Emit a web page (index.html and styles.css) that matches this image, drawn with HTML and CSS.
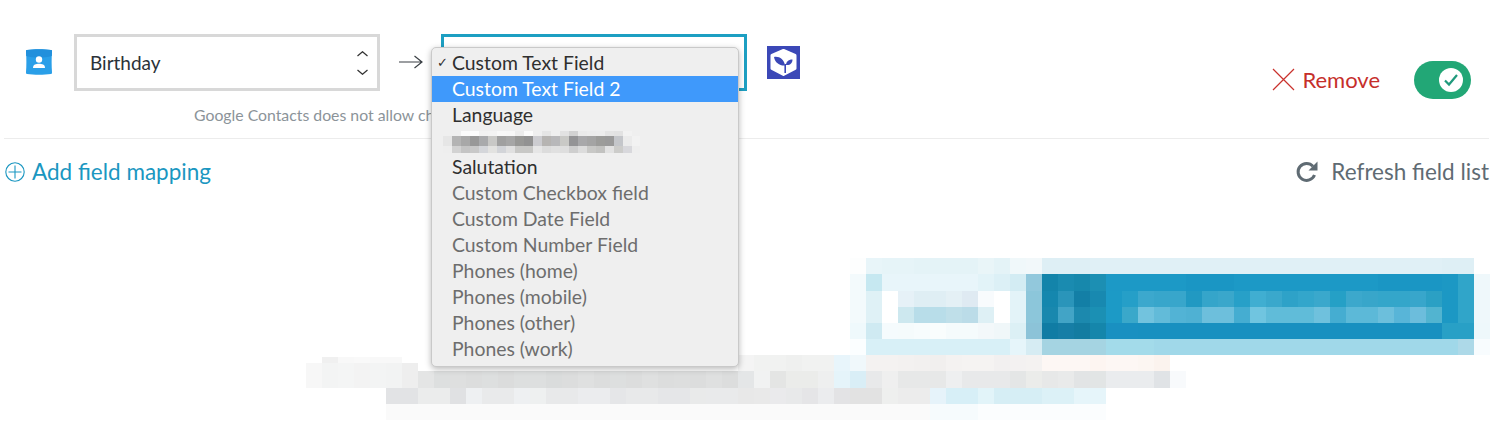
FILE: index.html

```html
<!DOCTYPE html>
<html lang="en">
<head>
    <meta charset="UTF-8">
    <title>Field mapping</title>
    <link rel="stylesheet" href="styles.css">
</head>
<body>
    <div class="mapping-row">
        <svg class="app-icon" width="28" height="26" viewBox="0 0 28 26">
            <path d="M2 1C9 0 19 0 26 1C27 1 27 2 27 3C26.500 9 26.500 17 27 23C27 24 27 25 26 25C19 26 9 26 2 25C1 25 1 24 1 23C1.500 17 1.500 9 1 3C1 2 1 1 2 1Z" fill="#2a9fe8"/>
            <path d="M1.200 7C9 9 19 9 26.800 7L27 3C27 1 27 1 26 1C19 0 9 0 2 1C1 1 1 1 1 3Z" fill="#2290dc"/>
            <circle cx="14" cy="10.500" r="3.200" fill="#fff"/>
            <path d="M8 19C8 15.500 11 14.800 14 14.800C17 14.800 20 15.500 20 19Z" fill="#fff"/>
        </svg>
        <div class="field">
            <span>Birthday</span>
            <svg class="updown" width="11" height="24" viewBox="0 0 11 24">
                <path d="M0.500 5L5.500 0.700L10.500 5M0.500 19L5.500 23.300L10.500 19" fill="none" stroke="#333" stroke-width="1.200"/>
            </svg>
        </div>
        <svg class="arrow" width="24" height="14" viewBox="0 0 24 14">
            <path d="M0 7H23M15.500 1L23 7L15.500 13" fill="none" stroke="#3a3f44" stroke-width="1.200"/>
        </svg>
        <div class="field-wrap">
            <div class="field field-active"></div>
            <ul class="menu">
                <li class="checked">Custom Text Field</li>
                <li class="hover">Custom Text Field 2</li>
                <li>Language</li>
                <li class="blurred"><svg id="menu-blur" width="197" height="25"></svg></li>
                <li>Salutation</li>
                <li class="muted">Custom Checkbox field</li>
                <li class="muted">Custom Date Field</li>
                <li class="muted">Custom Number Field</li>
                <li class="muted">Phones (home)</li>
                <li class="muted">Phones (mobile)</li>
                <li class="muted">Phones (other)</li>
                <li class="muted">Phones (work)</li>
            </ul>
        </div>
        <svg class="crm-logo" width="33" height="33" viewBox="0 0 33 33">
            <rect width="33" height="33" fill="#3b48b7"/>
            <path d="M16.500 4.500L28 9.500V22.500L16.500 28.500L5 22.500V9.500Z" fill="#fff" stroke="#fff" stroke-width="3" stroke-linejoin="round"/>
            <path d="M18.200 27V18" stroke="#3b48b7" stroke-width="1.600" fill="none"/>
            <path d="M18 19.500C13 20 8 17 7 11C12 10 17 13 18 19.500Z" fill="#3b48b7"/>
            <path d="M19 19C19 16 21 13.500 25.500 13.500C25.500 17 23 19.500 19 19Z" fill="#3b48b7"/>
        </svg>
        <div class="row-actions">
            <a class="remove">
                <svg width="23" height="23" viewBox="0 0 23 23">
                    <path d="M1 1L22 22M22 1L1 22" stroke="#c9322d" stroke-width="1.200" fill="none"/>
                </svg>
                Remove
            </a>
            <div class="toggle">
                <span class="knob">
                    <svg width="16" height="14" viewBox="0 0 16 14">
                        <path d="M2 7.500L6 11.500L14 2" fill="none" stroke="#1f9a7c" stroke-width="2.200"/>
                    </svg>
                </span>
            </div>
        </div>
    </div>
    <p class="hint">Google Contacts does not allow ch</p>
    <div class="bottom-bar">
        <a class="add-link">
            <svg width="20" height="20" viewBox="0 0 20 20">
                <circle cx="10" cy="10" r="9.200" fill="none" stroke="#1b97c1" stroke-width="1.100"/>
                <path d="M10 3.500V16.500M3.500 10H16.500" stroke="#1b97c1" stroke-width="1.100"/>
            </svg>
            Add field mapping
        </a>
        <a class="refresh-link">
            <svg width="24" height="24" viewBox="0 0 24 24">
                <path d="M19.500 15A8.500 8.500 0 1 1 18 6.300" fill="none" stroke="#5f6b73" stroke-width="3"/>
                <path d="M22.500 1.500V10.500H13.500Z" fill="#5f6b73"/>
            </svg>
            Refresh field list
        </a>
    </div>
    <svg id="promo-blur" class="promo-blur" width="1508" height="162"></svg>
    <script src="mosaic.js"></script>
</body>
</html>
```

FILE: styles.css

```css
body {
    margin: 0;
    font-family: Lato, "Open Sans", sans-serif;
    background-color: #fff;
    overflow: hidden;
}
a {
    display: flex;
    align-items: center;
}
.mapping-row {
    display: flex;
    align-items: flex-start;
    height: 57px;
    padding: 34px 37px 0 25px;
}
.app-icon {
    margin: 15px 21px 0 0;
}
.field {
    display: flex;
    align-items: center;
    justify-content: space-between;
    box-sizing: border-box;
    width: 306px;
    height: 57px;
    padding: 0 9px 0 13px;
    border: 3px solid #d8d8d8;
    font-size: 19px;
    color: #2b3238;
}
.field-active {
    border-color: #1d9fc2;
}
.arrow {
    margin: 21px 18px 0 19px;
}
.field-wrap {
    position: relative;
}
.menu {
    position: absolute;
    top: 13px;
    left: -10px;
    box-sizing: border-box;
    width: 308px;
    height: 320px;
    margin: 0;
    padding: 2px 0 0;
    list-style: none;
    background-color: #efefef;
    border: 1px solid #c9c9c9;
    border-radius: 5px;
    box-shadow: 0 2px 6px rgba(0, 0, 0, 0.28);
    font-size: 19.4px;
    color: #2f2f2f;
}
.menu li {
    position: relative;
    height: 26px;
    line-height: 26px;
    padding-left: 20px;
}
.menu .checked::before {
    content: "✓";
    position: absolute;
    left: 5px;
    font-size: 13px;
    font-weight: bold;
    font-family: "DejaVu Sans", sans-serif;
}
.menu .hover {
    background-color: #3f99fb;
    color: #fff;
}
.menu .muted {
    color: #6d6d6d;
}
.menu .blurred {
    padding-left: 11px;
}
.menu .blurred svg {
    display: block;
}
.crm-logo {
    margin: 12px 0 0 20px;
}
.row-actions {
    display: flex;
    align-items: center;
    margin: 27px 0 0 auto;
}
.remove {
    gap: 7px;
    padding-bottom: 2px;
    font-size: 22px;
    color: #c62f2b;
}
.toggle {
    display: flex;
    align-items: center;
    justify-content: flex-end;
    box-sizing: border-box;
    width: 57px;
    height: 38px;
    margin-left: 34px;
    padding-right: 8px;
    background-color: #22a776;
    border-radius: 19px;
}
.knob {
    display: flex;
    align-items: center;
    justify-content: center;
    width: 24px;
    height: 24px;
    background-color: #fff;
    border-radius: 50%;
}
.hint {
    height: 18px;
    margin: 15px 0 0 194px;
    line-height: 18px;
    font-size: 15.8px;
    color: #8b9399;
}
.bottom-bar {
    display: flex;
    justify-content: space-between;
    align-items: center;
    margin: 14px 19px 0 4px;
    padding: 19px 0 0 1px;
    border-top: 1px solid #ececec;
    font-size: 22.5px;
}
.add-link {
    gap: 7px;
    color: #1b97c1;
}
.refresh-link {
    gap: 12px;
    color: #5f6b73;
}
.promo-blur {
    display: block;
    margin-top: 73px;
}
```

FILE: mosaic.js

```js
// pixelated (redacted) parts of the screenshot, each row is [x, y, height, cell colours]
const cellW = 16;
const rep = (colour, n) => Array(n).fill(colour);

const promoRows = [
    [850, 0, 16, ['fdfefe', 'e8f5f9', 'e6f4f8', 'e6f4f8', ...rep('e4f3f7', 4), 'e9f5f8', 'e4f3f7', 'f0f8fa', 'f2f8fa', ...rep('deeff5', 3), ...rep('e0f0f6', 22), 'deeff5', 'deeff5']],
    [850, 16, 17, ['f3fafc', 'c6e8f1', ...rep('e8f5fa', 6), 'e2f3f8', 'dcf0f6', 'd3ecf3', '92c8dc', '1384aa', '1a8bb0', '1788ac', '1c8fb3', ...rep('1c99c6', 5), ...rep('1a96c4', 3), ...rep('1c99c6', 9), ...rep('1a96c4', 4), '1c98c4', '30a5c9', 'eff8fb']],
    [850, 33, 16, ['f3fafc', 'dff1f6', 'ffffff', 'e6f1f7', 'dfeef4', 'dfeef4', 'e4f0f5', 'dfeaf2', 'f8fbfd', 'ffffff', 'e3f3f8', '8cc6da', '1587ae', '2a95ba', '137fa6', '1889b0', '1c9ac6', '259fc8', '3ca8cd', '38a6cb', '38a6cb', '2199c2', '35a5ca', '3aa7cb', '27a0c8', '40aed1', '3aa8cc', '2ea2c8', '33a6cb', '3aa8cc', '25a0c6', '3ca8cc', '38a6ca', '34a6ca', '34a6ca', '38a6cb', '2ba0c4', '1c98c4', '30a5c9', 'eff8fb']],
    [850, 49, 16, ['f3fafc', 'dff1f6', 'ffffff', 'cde8ef', 'b8dde9', 'b8dde9', 'bfdfe9', 'bbdce8', 'def0f5', 'ffffff', 'e3f3f8', '8cc6da', '1988ae', '42a4c6', '1c89ae', '1b90b4', '1c9ac6', '3aa8ca', '72c3de', '62bbd9', '52b3d5', '4fb1d3', '6dbfdc', '6dbfdc', '45add1', '70c5e0', '60bcd9', '60bcd9', '60bcd9', '6fc1dd', '45add1', '5cb9d8', '5cb9d8', '6cbfdc', '58b5d8', '6cbddc', '52b4d0', '1c98c4', '30a5c9', 'eff8fb']],
    [850, 65, 16, ['eff9fc', 'cfeaf2', 'f5fbfd', 'f5fbfc', 'f7fcfd', 'f9fdfd', 'f5fbfc', 'f5fbfc', 'f3f8fa', 'f0f7f9', 'dcf0f5', '8cc3d8', '107ca4', '167ea6', '137ca1', '1586ab', '1990c1', '1990c1', ...rep('1890c0', 19), '28a0c6', '28a0c6', 'eef8fb']],
    [850, 81, 16, ['fbfeff', ...rep('d8f0f7', 9), 'e6f5fa', 'd6ecf3', ...rep('a5d4e2', 4), ...rep('a3dbea', 3), ...rep('a0d8e9', 19), 'add9e8', 'f8fcfe']],
    [322, 99, 6, ['f0f0f0', 'f8f8f8', 'f9f9f9', 'f8f8f8', 'f8f8f8']],
    [738, 97, 16, ['f4f4f4', 'f1f2f1', 'f1f2f1', 'eff0ef', 'f1f2f1', 'f1f2f1', 'e8f5fb', 'f0f8fb', 'f4f2f1', 'f4f2f1', 'f3f1f0', 'f2f0ef', 'f1efee', 'f4f2f1', 'f5f3f2', 'f5f3f2', 'f2f0f0', 'f3f1f1', 'f4f2f1', 'fdf7f4', 'fdf7f4', 'fdf7f4', 'fdf5f1', 'fdf7f4', 'fdf7f4', 'fcf6f2', 'fbf3ee']],
    [306, 105, 8, ['f7f7f7', 'f3f4f4', 'f4f5f5', 'f3f3f3', 'f3f4f4', 'f2f3f3', 'eeeeee']],
    [306, 113, 17, ['f7f7f7', 'f3f4f4', 'f4f5f5', 'f3f3f3', 'f3f4f4', 'f2f3f3', 'eeeeee', 'e4e5e5', 'dddfdf', 'dedfdf', 'dcdddd', 'dddfdf', 'dbdcdc', 'dddfdf', 'dddfdf', 'dadcdc', 'dcdddd', 'dfe0e0', 'dcdddd', 'dddfdf', 'dcdddd', 'dfe0e0', 'dcdddd', 'dddede', 'dcdddd', 'dfe0e0', 'dcdddd', 'e4e6e7', 'f1f2f2', 'e4e5e4', 'ebecea', 'ebecea', 'eeefef', 'e5f4fa', 'd9eef6', 'e8e9ea', 'efefef', 'e7e8e8', 'e7e8e8', 'e7e8e8', 'eeeff0', 'e8e9ea', 'e8e9ea', 'e8e9ea', 'e4e6e6', 'ebecea', 'e7e8e8', 'e9eaea', 'e2e4e5', 'e2e5e5', 'eaecee', 'eaecee', 'eaecee', 'e0e3e6', 'f8fafc']],
    [386, 130, 16, ['e2e3e5', 'e2e3e5', 'ebecec', 'ebecec', 'e0e1e3', 'eef0f2', 'e9eaeb', 'e9eaeb', 'eef0f2', 'eef0f0', 'e8e9ea', 'e8e9ea', 'ebecee', 'ebecee', 'e5e6e8', 'e8e9ea', 'e8e9ea', 'e5e6e8', 'e5e6e8', 'e9eaea', 'e9eaeb', 'e9eaeb', 'e8e8e8', 'e9e9e9', 'eaeaec', 'e8e9ea', 'e5e5e7', 'ebecee', 'e3e3e5', 'e2e2e2', 'e2e2e2', 'eeefee', 'ececec', 'ececec', 'e6f3fa', 'd7eff7', 'd7eff7', 'e2f4f9', 'd6eef5', 'd6eef5', 'd6eef5', 'dcf1f7', 'dcf1f7', 'e6f5fa', 'e6f5fa']],
    [386, 146, 16, [...rep('fafafa', 34), ...rep('f6fbfd', 3), ...rep('fbfdfe', 8)]]
];

const menuRows = [
    [0, 3, 5, ['efefef', 'efefef', 'fbfbfb', 'fcfcfc', 'f2f2f2', 'f3f3f3', 'f8f8f8', 'f7f7f7', 'ececec', 'fbfbfb', 'efefef', 'e5e5e5', 'efefef', 'e2e2e2', 'd2d2d2', 'eaeaea', 'ececec', 'ededed', 'e4e4e4', 'e2e2e2', 'f2f2f2', 'efefef']],
    [0, 8, 10, ['e6e6e6', 'b4b4b4', 'a8a8a8', '989898', 'a9aaac', 'c8c8c6', 'a0a0a0', 'a6a6a6', '989896', '929292', 'ccccd0', 'b6b4b2', 'b8b8ba', 'c9c9c6', '949496', 'a8a8aa', 'a4a4a4', '9c9c9a', '9a9a9a', 'c4c6ca', 'ebebeb', 'f2f2f2']],
    [0, 18, 7, ['eeeeee', 'd2d2d2', 'c4c4c4', 'c8c8c8', 'd4d6da', 'e2e2e0', 'd2d4d8', 'e0e0e0', 'c8c8c6', 'c8c8c6', 'e6e6e6', 'dcdcdc', 'e0e0e0', 'dedede', 'cecece', 'dcdcdc', 'c8c8c6', 'c2c2c0', 'e2e2e2', 'ccccca', 'd8d8dc', 'eeeeee']]
];

function drawRows(svg, rows, w) {
    rows.forEach(([x, y, h, cells]) => {
        cells.forEach((colour, i) => {
            const rect = document.createElementNS('http://www.w3.org/2000/svg', 'rect');
            rect.setAttribute('x', x + i * w);
            rect.setAttribute('y', y);
            rect.setAttribute('width', w);
            rect.setAttribute('height', h);
            rect.setAttribute('fill', '#' + colour);
            svg.appendChild(rect);
        });
    });
}

drawRows(document.getElementById('promo-blur'), promoRows, cellW);
drawRows(document.getElementById('menu-blur'), menuRows, 9);
```
